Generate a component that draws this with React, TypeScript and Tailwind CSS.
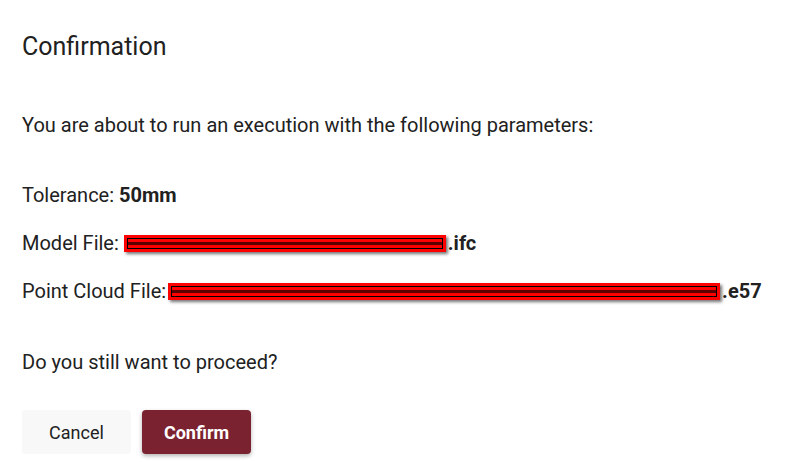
import React from 'react';

// Redacted filename: red box with a dark inner stripe and a drop shadow
function Redacted({ width }: { width: number }) {
  return (
    <span
      className="mx-[2px] inline-block h-[17px] translate-y-[2px] border-[3px] border-[#ff0000] bg-[#3a0000] shadow-[2px_2px_3px_rgba(0,0,0,0.55)]"
      style={{ width }}
    >
      <span className="block h-full border border-black bg-[#ff0000]">
        <span className="mt-[3px] block h-[3px] bg-[#5a0000]" />
      </span>
    </span>
  );
}

export default function App() {
  return (
    <div className="h-[462px] w-[786px] bg-white font-['Roboto',sans-serif] text-[#212121]">
      <div className="px-[22px] pt-[31px]">
        <h2 className="text-[25px] font-normal leading-[32px]">Confirmation</h2>

        <div className="mt-[48px] text-[20px] leading-[28px]">
          <p>You are about to run an execution with the following parameters:</p>

          <div className="mt-[42px] flex flex-col gap-[20px]">
            <p>
              Tolerance: <span className="font-bold">50mm</span>
            </p>
            <p className="whitespace-nowrap">
              Model File:
              <span className="ml-[3px]" />
              <Redacted width={322} />
              <span className="font-bold">.ifc</span>
            </p>
            <p className="whitespace-nowrap">
              Point Cloud File:
              <Redacted width={552} />
              <span className="font-bold">.e57</span>
            </p>
          </div>

          <p className="mt-[43px]">Do you still want to proceed?</p>
        </div>

        <div className="mt-[34px] flex gap-[11px]">
          <button className="h-[44px] w-[109px] rounded-[4px] bg-[#f8f8f8] text-[18px] text-[#212121]">
            Cancel
          </button>
          <button className="h-[44px] w-[109px] rounded-[4px] bg-[#7b2230] text-[18px] font-bold text-white shadow-[0_2px_4px_rgba(0,0,0,0.3)]">
            Confirm
          </button>
        </div>
      </div>
    </div>
  );
}
